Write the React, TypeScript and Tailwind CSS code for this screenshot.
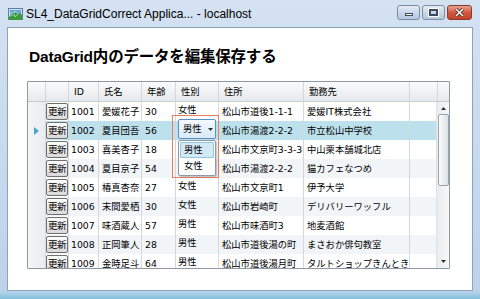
import React from "react";

type Row = { id: string; name: string; age: string; sex: string; addr: string; work: string };

const rows: Row[] = [
  { id: "1001", name: "愛媛花子", age: "30", sex: "女性", addr: "松山市道後1-1-1", work: "愛媛IT株式会社" },
  { id: "1002", name: "夏目団吾", age: "56", sex: "", addr: "松山市湯渡2-2-2", work: "市立松山中学校" },
  { id: "1003", name: "喜美杏子", age: "18", sex: "", addr: "松山市文京町3-3-3", work: "中山栗本舗城北店" },
  { id: "1004", name: "夏目京子", age: "54", sex: "", addr: "松山市湯渡2-2-2", work: "猫カフェなつめ" },
  { id: "1005", name: "椿真杏奈", age: "27", sex: "女性", addr: "松山市文京町1", work: "伊予大学" },
  { id: "1006", name: "末間愛栖", age: "30", sex: "女性", addr: "松山市岩崎町", work: "デリバリーワッフル" },
  { id: "1007", name: "味酒蔵人", age: "57", sex: "男性", addr: "松山市味酒町3", work: "地麦酒館" },
  { id: "1008", name: "正岡筆人", age: "28", sex: "男性", addr: "松山市道後湯の町", work: "まさおか俳句教室" },
  { id: "1009", name: "金時足斗", age: "64", sex: "男性", addr: "松山市道後湯月町", work: "タルトショップきんとき" },
];

function WinButton({ kind }: { kind: "min" | "max" | "close" }) {
  const base =
    kind === "close"
      ? "w-[25px] bg-gradient-to-b from-[#e8a293] via-[#d2583f] to-[#c4412a] border-[#8b3a2c]"
      : "w-[23px] bg-gradient-to-b from-[#e4ecf5] via-[#c9d8ea] to-[#b5c8df] border-[#7d8ea4]";
  return (
    <div className={`h-[15px] rounded-[3px] border ${base} flex items-center justify-center`}>
      {kind === "min" && <div className="w-[8px] h-[3px] bg-white border border-[#3c4c60] mt-[4px]" />}
      {kind === "max" && <div className="w-[9px] h-[7px] border-2 border-[#3c4c60] shadow-[0_0_0_1px_#fff]" />}
      {kind === "close" && (
        <svg width="11" height="9" viewBox="0 0 11 9">
          <path d="M2 1 L9 8 M9 1 L2 8" stroke="#4a1a10" strokeWidth="3" />
          <path d="M2 1 L9 8 M9 1 L2 8" stroke="#fff" strokeWidth="1.6" />
        </svg>
      )}
    </div>
  );
}

function UpdateButton() {
  return (
    <div className="w-[22px] h-[17px] rounded-[2px] border border-[#707070] bg-gradient-to-b from-[#fdfdfd] to-[#d9d9d9] flex items-center justify-center text-[9.5px] leading-none text-black tracking-[-0.6px]">
      更新
    </div>
  );
}

const W = ["w-[18px]", "w-[23px]", "w-[30px]", "w-[43px]", "w-[34px]", "w-[43px]", "w-[85px]", "w-[106px]", "w-[28px]"];

export default function App() {
  return (
    <div className="w-[480px] h-[299px] bg-gradient-to-b from-[#d4e2f2] to-[#bcd2ea] flex flex-col overflow-hidden font-['DejaVu_Sans','Noto_Sans_CJK_JP',sans-serif] text-black select-none">
      {/* title bar */}
      <div className="h-[27px] flex items-center pl-[8px] pr-[8px] shrink-0">
        <svg width="15" height="13" viewBox="0 0 15 13" className="mr-[3px] mt-[1px]">
          <rect x="0.5" y="0.5" width="14" height="11" fill="#cfe3f3" stroke="#5b7fa6" />
          <rect x="2" y="2" width="11" height="8" fill="#6aa7d8" />
          <path d="M1 9 L5 6 L8 8 L12 5 L14 7 L14 12 L1 12 Z" fill="#3d9a3b" />
          <path d="M3 5 L7 5 L7 3 L10 6 L7 9 L7 7 L3 7 Z" fill="#2f8f3a" stroke="#fff" strokeWidth="0.5" />
        </svg>
        <span className="text-[12px] text-black font-['Liberation_Sans',sans-serif] mt-[1px]">
          SL4_DataGridCorrect Applica... - localhost
        </span>
        <div className="ml-auto flex items-center gap-[2px] mt-[-3px]">
          <WinButton kind="min" />
          <WinButton kind="max" />
          <WinButton kind="close" />
        </div>
      </div>
      {/* client area */}
      <div className="mx-[7px] flex-1 border border-[#8da2bb] bg-white relative flex flex-col">
        <div className="pl-[21px] pt-[19px] h-[53px] text-[15.5px] font-bold leading-[20px] tracking-[-0.2px] font-['Liberation_Sans','Noto_Sans_CJK_JP',sans-serif]">
          DataGrid内のデータを編集保存する
        </div>
        {/* grid */}
        <div className="ml-[19px] w-[423px] h-[188px] border border-[#8c99a6] rounded-[1px] flex flex-col overflow-hidden bg-white text-[9.3px]">
          {/* header */}
          <div className="h-[20px] flex shrink-0 bg-gradient-to-b from-[#fbfbfc] to-[#e6e9ec] border-b border-[#c7ccd1]">
            {["", "", "ID", "氏名", "年齢", "性別", "住所", "勤務先", ""].map((h, i) => (
              <div key={i} className={`${W[i]} h-full border-r border-[#d3d8dd] flex items-center pl-[5px] shrink-0`}>
                {h}
              </div>
            ))}
            <div className="w-[13px] h-full" />
          </div>
          <div className="flex flex-1 min-h-0">
            <div className="w-[410px] flex flex-col overflow-hidden">
              {rows.map((r, idx) => {
                const selected = idx === 1;
                const bg = selected ? "bg-[#bde1ec]" : idx % 2 === 0 ? "bg-[#ffffff]" : "bg-[#f2f5f8]";
                return (
                  <div key={r.id} className={`h-[19px] flex shrink-0 ${bg}`}>
                    <div className={`${W[0]} h-full shrink-0 bg-gradient-to-r from-[#f3f5f7] to-[#e9edf0] border-r border-[#d3d8dd] flex items-center justify-center`}>
                      {selected && (
                        <svg width="5" height="8" viewBox="0 0 5 8">
                          <path d="M0 0 L5 4 L0 8 Z" fill="#4aa3d6" />
                        </svg>
                      )}
                    </div>
                    <div className={`${W[1]} h-full shrink-0 border-r border-[#d3d8dd] flex items-center justify-center`}>
                      <UpdateButton />
                    </div>
                    <div className={`${W[2]} h-full shrink-0 border-r border-[#d3d8dd] flex items-center pl-[2px]`}>{r.id}</div>
                    <div className={`${W[3]} h-full shrink-0 border-r border-[#d3d8dd] flex items-center pl-[3px] whitespace-nowrap overflow-hidden`}>{r.name}</div>
                    <div className={`${W[4]} h-full shrink-0 border-r border-[#d3d8dd] flex items-center pl-[3px]`}>{r.age}</div>
                    <div className={`${W[5]} h-full shrink-0 border-r border-[#d3d8dd] flex items-start pt-[1px] pl-[2px]`}>{r.sex}</div>
                    <div className={`${W[6]} h-full shrink-0 border-r border-[#d3d8dd] flex items-center pl-[3px] whitespace-nowrap overflow-hidden`}>{r.addr}</div>
                    <div className={`${W[7]} h-full shrink-0 border-r border-[#d3d8dd] flex items-center pl-[3px] whitespace-nowrap overflow-hidden`}>{r.work}</div>
                    <div className={`${W[8]} h-full shrink-0`} />
                  </div>
                );
              })}
            </div>
            {/* scrollbar */}
            <div className="w-[13px] flex flex-col bg-gradient-to-r from-[#eaecee] to-[#f6f7f8] border-l border-[#dde1e5] items-center">
              <div className="h-[12px] flex items-center justify-center">
                <svg width="5" height="3" viewBox="0 0 5 3"><path d="M0 3 L2.5 0 L5 3 Z" fill="#303030" /></svg>
              </div>
              <div className="w-[11px] h-[72px] rounded-[2px] border border-[#9aa4ae] bg-gradient-to-r from-[#fafbfc] to-[#dde2e7]" />
              <div className="flex-1" />
              <div className="h-[13px] flex items-center justify-center">
                <svg width="5" height="3" viewBox="0 0 5 3"><path d="M0 0 L2.5 3 L5 0 Z" fill="#303030" /></svg>
              </div>
            </div>
          </div>
        </div>
        {/* combo edit overlay */}
        <div className="absolute left-[164px] top-[87px] w-[47px] h-[63px] border border-[#ea7f60]" />
        <div className="absolute left-[170px] top-[91px] w-[38px] h-[20px] rounded-[2px] border border-[#5c90c0] bg-gradient-to-b from-[#f4f9fd] to-[#d8e9f6] flex items-center pl-[4px] text-[9.3px]">
          男性
          <svg width="5" height="3" viewBox="0 0 5 3" className="ml-[6px]"><path d="M0 0 L2.5 3 L5 0 Z" fill="#303030" /></svg>
        </div>
        <div className="absolute left-[170px] top-[112px] w-[38px] h-[36px] rounded-[2px] border border-[#8e9aa6] bg-white shadow-[1px_1px_2px_rgba(0,0,0,0.25)] flex flex-col p-[1px] text-[9.3px]">
          <div className="h-[16px] rounded-[1px] border border-[#94c6df] bg-[#d3eaf5] flex items-center pl-[3px]">男性</div>
          <div className="h-[16px] flex items-center pl-[4px]">女性</div>
        </div>
      </div>
      <div className="h-[8px] shrink-0 bg-gradient-to-b from-[#bcd4ec] to-[#7fc0dc]" />
    </div>
  );
}
